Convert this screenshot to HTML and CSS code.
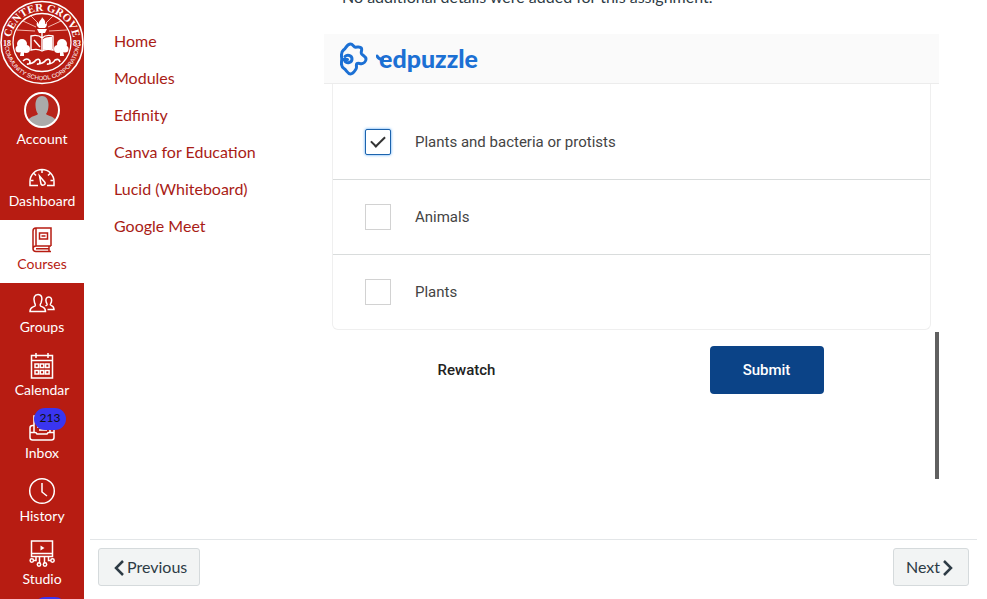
FILE: index.html
```html
<!DOCTYPE html>
<html lang="en">

<head>
  <meta charset="UTF-8">
  <meta name="viewport" content="width=device-width, initial-scale=1.0">
  <title>Assignment</title>
  <link rel="stylesheet" href="styles.css">
</head>

<body>

  <nav class="sidebar" aria-label="Global navigation">
    <a class="sidebar__logo" href="#">
      <svg viewBox="0 0 84 85" width="84" height="85">
        <defs>
          <path id="arc-top" d="M10.5 42.500a31.500 31.500 0 0 1 63 0" />
          <path id="arc-bottom" d="M4.500 42.500a37.500 37.500 0 0 0 75 0" />
        </defs>
        <circle cx="42" cy="42.500" r="41" fill="none" stroke="#fff" stroke-width="1.600" />
        <circle cx="42" cy="42.500" r="29" fill="none" stroke="#fff" stroke-width="1.300" />
        <text class="seal__name" text-anchor="middle"><textPath href="#arc-top" startOffset="50%">CENTER GROVE</textPath></text>
        <text class="seal__corp" text-anchor="middle"><textPath href="#arc-bottom" startOffset="50%">COMMUNITY SCHOOL CORPORATION</textPath></text>
        <text class="seal__year" x="3" y="46">18</text>
        <text class="seal__year" x="73" y="46">83</text>
        <path d="M36 27L23 21M35 31L17 30M38 23L31 16M48 27L61 21M49 31L67 30M46 23L53 16" stroke="#f4b5ab" stroke-width="1" />
        <g fill="#fff">
          <path d="M42 17c1 2 4 3 3 7l2-1c0 3-1 4-2 5h-6c-2-2-3-3-2-6l2 2c-1-3 3-4 3-7z" />
          <path d="M37 29h10l-2 4h-6z" />
          <circle cx="22" cy="44" r="5" /><circle cx="26" cy="49" r="4" /><circle cx="19" cy="49" r="3.500" />
          <circle cx="62" cy="44" r="5" /><circle cx="58" cy="49" r="4" /><circle cx="65" cy="49" r="3.500" />
          <path d="M21 50h3v6h-4zM60 50h3l1 6h-4z" />
        </g>
        <path d="M31 36c4-1 8-1 11 2 3-3 7-3 11-2v14c-4-1-8-1-11 1-3-2-7-2-11-1zM42 33v17M34 40l6 7" fill="none" stroke="#fff" stroke-width="1.400" />
        <path d="M43 39c3-2 6-2 9-2v12c-3 0-6 0-9 1z" fill="#fff" />
        <path d="M23 61q4-4 7 0 0 4-3 3 6 0 9-4 3-2 4 1 0 4-3 3 6 0 9-4 3-2 4 1 0 4-3 3 6 0 8-4 4-2 5 2" fill="none" stroke="#fff" stroke-width="1.600" />
      </svg>
    </a>

    <a class="sidebar__item sidebar__item--account" href="#">
      <svg viewBox="0 0 36 36" width="36" height="36">
        <circle cx="18" cy="18" r="17" fill="#b8231a" />
        <path d="M4 28c3-4 8-4 10-6-3-3-5-18 4-18s7 15 4 18c2 2 7 2 10 6-7 9-21 9-28 0z" fill="#aaa" />
        <circle cx="18" cy="18" r="17" fill="none" stroke="#fff" stroke-width="2" />
      </svg>
      <span>Account</span>
    </a>

    <a class="sidebar__item" href="#">
      <svg class="icon" viewBox="0 0 26 26">
        <path d="M9 21.500H1v-4a12 12 0 0 1 24 0v4h-7M13 6v3M5 9.500l2 2M21 9.500l-2 2M2 16.500h2.500M24 16.500h-2.500" />
        <path d="M10.500 12l5.500 6.500c1 2-2.500 4-4 1.500z" />
      </svg>
      <span>Dashboard</span>
    </a>

    <a class="sidebar__item sidebar__item--active" href="#">
      <svg class="icon" viewBox="0 0 26 26">
        <path d="M22 19V1H7Q4 1 4 4v17.500M22 19H7q-3 0-3 2.800Q4 24.500 7 24.500h15M20 19v5.500M7 1v18M7 21.800h13M10.500 6h8v6h-8zM12.500 9h4" />
      </svg>
      <span>Courses</span>
    </a>

    <a class="sidebar__item" href="#">
      <svg class="icon" viewBox="0 0 26 26">
        <path d="M1 21.500h15.500c0-5-3-4-5-5.500-1-1 0-2 .7-3.500C14 8 12.500 4.500 9 4.500S4 8 5.500 12.500C6 14 7 15 6 16c-2 1.500-5 .500-5 5.500z" />
        <path d="M18.500 19.500H25c0-3.500-2-3.500-3.500-4.500-.7-.7.500-1.600.9-3 .8-3-.4-5-2.600-5s-3.600 2-2.600 5c.4 1.400 1.400 2.300.8 3l-1.500 1" />
      </svg>
      <span>Groups</span>
    </a>

    <a class="sidebar__item" href="#">
      <svg class="icon" viewBox="0 0 26 26">
        <path d="M2.500 2.500h21V25h-21zM2.500 7.500h21M7 0v5M19 0v5M6 11h3.500v3.500H6zM11.300 11h3.500v3.500h-3.500zM16.600 11h3.500v3.500h-3.500zM6 17.500h3.500V21H6zM11.300 17.500h3.500V21h-3.500zM16.600 17.500h3.500V21h-3.500z" />
      </svg>
      <span>Calendar</span>
    </a>

    <a class="sidebar__item" href="#">
      <svg class="icon" viewBox="0 0 26 26">
        <path d="M5 16V0h16v16M8 11h5M10 14h8M5 9.500H3.500Q1 9.500 1 12v9.500Q1 24 3.500 24h19q2.500 0 2.500-2.500V12q0-2.500-2.500-2.500H21M1 16.500h5q1.500 0 2 1.500h10q.500-1.500 2-1.500h5" />
      </svg>
      <b class="badge">213</b>
      <span>Inbox</span>
    </a>

    <a class="sidebar__item" href="#">
      <svg class="icon" viewBox="0 0 26 26">
        <circle cx="13" cy="12" r="12.300" />
        <path d="M13 4v9l5 4" />
      </svg>
      <span>History</span>
    </a>

    <a class="sidebar__item" href="#">
      <svg class="icon" viewBox="0 0 26 26">
        <path d="M2.500-1h21v15.500h-21zM2.500 11.500h21M7 14.500v4H4M10.500 14.500v7M15.500 14.500v7M19.500 14.500v4h2.500" />
        <path d="M11.500 3.500l4 2.500-4 2.500z" fill="currentColor" stroke="none" />
        <circle cx="2.800" cy="18.500" r="1.700" /><circle cx="10" cy="22.500" r="1.700" /><circle cx="16" cy="22.500" r="1.700" /><circle cx="23.500" cy="18.500" r="1.700" />
      </svg>
      <span>Studio</span>
    </a>

    <a class="sidebar__item" href="#" aria-label="Help">
      <b class="badge"></b>
    </a>
  </nav>

  <div class="page">
    <div class="page__body">
      <nav class="course-nav" aria-label="Course">
        <a href="#">Home</a>
        <a href="#">Modules</a>
        <a href="#">Edfinity</a>
        <a href="#">Canva for Education</a>
        <a href="#">Lucid (Whiteboard)</a>
        <a href="#">Google Meet</a>
      </nav>

      <main class="assignment">
        <p class="assignment__details">No additional details were added for this assignment.</p>

        <section class="player">
          <header class="player__header">
            <svg class="player__mark" viewBox="0 0 28 34" width="28" height="34">
              <path d="M2 17.500C1 13 1 10 3.500 8 6 7 6.500 2 10.500 2 13 2 13.500 5 15.500 5.200c2.500 0 4.500-1 5.800.8 1.200 2-.8 4 .2 5.800 1 1.700 4.500 2.700 4.500 5.200s-2.500 4.500-4.500 4.800c-1.700.2-3-1.300-4.500-.3-1.500 1.200.3 3.500-1 5.500s-3 5-5.500 5c-3 0-4-4-6.500-5.500-3-2-3-5.500-2-9z" />
              <path d="M2 17.500h5.500M5 14.500c2-2 7-1.500 7 2.500s-5 4.500-7 2.500" />
            </svg>
            <svg class="player__tail" viewBox="0 0 8 12" width="8" height="12">
              <path d="M1 3q2 4 6 3" />
            </svg>
            <span class="player__brand">edpuzzle</span>
          </header>

          <form class="quiz">
            <div class="quiz__card">
              <label class="quiz__option"><input type="checkbox" checked>Plants and bacteria or protists</label>
              <label class="quiz__option"><input type="checkbox">Animals</label>
              <label class="quiz__option"><input type="checkbox">Plants</label>
            </div>
            <div class="quiz__actions">
              <button class="btn" type="button">Rewatch</button>
              <button class="btn btn--primary" type="button">Submit</button>
            </div>
          </form>
          <div class="player__scrollbar"></div>
        </section>
      </main>
    </div>

    <footer class="pager">
      <a class="pager__link" href="#">
        <svg viewBox="0 0 12 16" width="12" height="16"><path d="M10 1L3 8l7 7" /></svg>Previous
      </a>
      <a class="pager__link" href="#">
        Next<svg viewBox="0 0 12 16" width="12" height="16"><path d="M2 1l7 7-7 7" /></svg>
      </a>
    </footer>
  </div>

</body>

</html>
```
FILE: styles.css
```css
:root {
  --clr-brand: #b71c12;
  --clr-link: #a91c16;
  --clr-text: #2d3b45;
  --clr-badge: #3a35f0;
  --clr-edpuzzle: #1c70d4;
  --clr-submit: #0b4387;
  --fnt-main: Lato, sans-serif;
  --fnt-quiz: Roboto, sans-serif;
}

* {
  box-sizing: border-box;
  margin: 0;
  padding: 0;
}

body {
  display: flex;
  height: 100vh;
  overflow: hidden;
  font-family: var(--fnt-main);
  font-size: 16px;
  color: var(--clr-text);
  background-color: #fff;
}

a {
  color: inherit;
  text-decoration: none;
}

/* Global navigation */

.sidebar {
  flex: none;
  width: 84px;
  overflow: hidden;
  color: #fff;
  background-color: var(--clr-brand);
}

.sidebar__logo,
.sidebar__logo svg {
  display: block;
}

.sidebar__logo text {
  fill: #fff;
}

.seal__name {
  font: bold 11px "Liberation Serif", serif;
}

.seal__corp {
  font: 6px "Liberation Sans", sans-serif;
}

.seal__year {
  font: bold 8px "Liberation Serif", serif;
}

.sidebar__item {
  position: relative;
  display: flex;
  flex-direction: column;
  align-items: center;
  gap: 1px;
  height: 63px;
  padding-top: 7px;
  font-size: 14px;
  line-height: 20px;
}

.sidebar__item--account {
  height: 72px;
}

.sidebar__item--active {
  color: var(--clr-brand);
  background-color: #fff;
}

.icon {
  width: 26px;
  height: 26px;
  overflow: visible;
  fill: none;
  stroke: currentColor;
  stroke-width: 1.5;
}

.badge {
  position: absolute;
  top: -1px;
  left: 34px;
  width: 32px;
  height: 22px;
  border-radius: 11px;
  font-size: 12px;
  font-weight: 400;
  text-align: center;
  color: #111;
  background-color: var(--clr-badge);
}

/* Page */

.page {
  flex: 1;
  display: flex;
  flex-direction: column;
  min-width: 0;
}

.page__body {
  flex: 1;
  display: flex;
  min-height: 0;
}

.course-nav {
  flex: none;
  width: 240px;
  padding: 22px 0 0 30px;
  color: var(--clr-link);
}

.course-nav a {
  display: block;
  line-height: 37px;
}

.assignment {
  flex: 1;
  display: flex;
  flex-direction: column;
  padding: 0 48px 60px 0;
}

.assignment__details {
  margin-top: -15px;
  padding: 0 18px 25px;
  line-height: 24px;
}

/* Video player */

.player {
  position: relative;
  flex: 1;
}

.player__header {
  display: flex;
  align-items: center;
  height: 50px;
  padding-left: 16px;
  border-bottom: 1px solid #ececec;
  background-color: #fafafa;
}

.player__mark,
.player__tail {
  fill: none;
  stroke: var(--clr-edpuzzle);
  stroke-width: 3;
  stroke-linejoin: round;
  stroke-linecap: round;
}

.player__tail {
  margin-left: 8px;
  margin-right: -5px;
}

.player__brand {
  padding-bottom: 2px;
  font-size: 25px;
  font-weight: 900;
  line-height: 30px;
  color: var(--clr-edpuzzle);
}

.player__scrollbar {
  position: absolute;
  right: 0;
  bottom: 0;
  width: 4px;
  height: 33%;
  background-color: #606060;
}

.quiz {
  font-family: var(--fnt-quiz);
  color: #444;
}

.quiz__card {
  margin: 0 8px;
  padding-top: 20px;
  border: 1px solid #efefef;
  border-top: 0;
  border-radius: 0 0 6px 6px;
}

.quiz__option {
  display: flex;
  align-items: center;
  gap: 24px;
  height: 75px;
  padding-left: 32px;
  font-size: 15px;
}

.quiz__option + .quiz__option {
  border-top: 1px solid #d9dcdc;
}

.quiz__option input {
  appearance: none;
  display: grid;
  place-items: center;
  width: 26px;
  height: 26px;
  border: 1px solid #d2d2d2;
  background-color: #fff;
}

.quiz__option input:checked {
  border-color: #1c63ad;
  border-radius: 2px;
  box-shadow: 0 0 3px #4da3f5;
}

.quiz__option input:checked::after {
  content: "";
  width: 12px;
  height: 6px;
  margin-bottom: 4px;
  border: solid #333;
  border-width: 0 0 2px 2px;
  transform: rotate(-45deg);
}

.quiz__actions {
  display: flex;
  justify-content: center;
  gap: 186px;
  padding: 16px 30px 0 0;
}

.btn {
  width: 114px;
  height: 48px;
  border: none;
  border-radius: 4px;
  font-family: var(--fnt-quiz);
  font-size: 15px;
  font-weight: 500;
  color: #222;
  background-color: transparent;
  cursor: pointer;
}

.btn--primary {
  color: #fff;
  background-color: var(--clr-submit);
}

/* Previous / next */

.pager {
  display: flex;
  justify-content: space-between;
  height: 60px;
  margin: 0 10px 0 6px;
  padding: 8px;
  border-top: 1px solid #e3e6e8;
}

.pager__link {
  display: flex;
  align-items: center;
  height: 38px;
  padding: 0 12px 2px;
  border: 1px solid #d5dadc;
  border-radius: 3px;
  background-color: #f2f4f4;
}

.pager__link svg {
  margin: 3px 2px 0;
  fill: none;
  stroke: var(--clr-text);
  stroke-width: 2.5;
}
```
